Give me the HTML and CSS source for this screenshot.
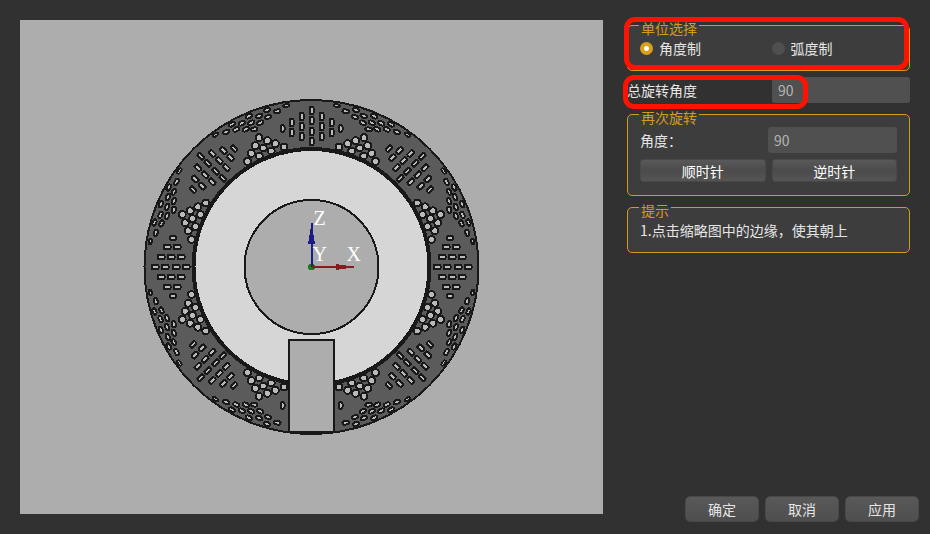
FILE: index.html
```html
<!DOCTYPE html>
<html lang="zh-CN">
<head>
<meta charset="utf-8">
<meta name="viewport" content="width=device-width, initial-scale=1">
<title>旋转</title>
<link rel="stylesheet" href="styles.css">
</head>
<body>
<main class="dialog">
  <div class="preview">
    <svg class="model" viewBox="-168.5 -168 337 336" width="337" height="336" aria-hidden="true">
      <defs>
        <!-- long slots, radial -->
        <g id="slots" class="hole">
          <rect x="-2" y="-160" width="4" height="7" rx="1"/>
          <rect x="-2" y="-150" width="4" height="7" rx="1"/>
          <rect x="-2" y="-139" width="4" height="7" rx="1"/>
          <rect x="-2" y="-129" width="4" height="7" rx="1"/>
          <rect x="-12" y="-154" width="4" height="7" rx="1"/>
          <rect x="-12" y="-144" width="4" height="7" rx="1"/>
          <rect x="-12" y="-134" width="4" height="7" rx="1"/>
          <rect x="8" y="-154" width="4" height="7" rx="1"/>
          <rect x="8" y="-144" width="4" height="7" rx="1"/>
          <rect x="8" y="-134" width="4" height="7" rx="1"/>
          <rect x="-22" y="-148" width="4" height="7" rx="1"/>
          <rect x="-22" y="-138" width="4" height="7" rx="1"/>
          <rect x="18" y="-148" width="4" height="7" rx="1"/>
          <rect x="18" y="-138" width="4" height="7" rx="1"/>
          <rect x="-31" y="-142" width="4" height="7" rx="2"/>
          <rect x="27" y="-142" width="4" height="7" rx="2"/>
        </g>
        <!-- round holes by the inner ring, small holes by the rim -->
        <g id="fan">
          <g class="hole">
            <circle cx="-52.5" cy="-129.3" r="3.5"/>
            <circle cx="-44.2" cy="-126.3" r="3.5"/>
            <circle cx="-36.2" cy="-123.3" r="3.5"/>
            <circle cx="-27.5" cy="-120" r="3.5"/>
            <circle cx="-56.2" cy="-121.3" r="3.5"/>
            <circle cx="-48.2" cy="-119" r="3.5"/>
            <circle cx="-40.2" cy="-116" r="3.5"/>
            <circle cx="-60.2" cy="-113.7" r="3.5"/>
            <circle cx="-52.2" cy="-111" r="3.5"/>
            <circle cx="-64" cy="-105.7" r="3.5"/>
          </g>
          <g class="hole">
            <ellipse cx="-85.2" cy="-135" rx="3.3" ry="1.9" transform="rotate(-25 -85.2 -135)"/>
            <ellipse cx="-75.2" cy="-137.7" rx="3.3" ry="1.9" transform="rotate(-25 -75.2 -137.7)"/>
            <ellipse cx="-65.8" cy="-137.7" rx="3.3" ry="1.9" transform="rotate(-22 -65.8 -137.7)"/>
            <ellipse cx="-57.2" cy="-137.7" rx="3.3" ry="1.9" transform="rotate(-10 -57.2 -137.7)"/>
            <ellipse cx="-79.5" cy="-142.7" rx="3.3" ry="1.9" transform="rotate(-25 -79.5 -142.7)"/>
            <ellipse cx="-69.8" cy="-143.7" rx="3.3" ry="1.9" transform="rotate(-22 -69.8 -143.7)"/>
            <ellipse cx="-60.2" cy="-144.3" rx="3.3" ry="1.9" transform="rotate(-22 -60.2 -144.3)"/>
            <ellipse cx="-51.2" cy="-144.3" rx="3.3" ry="1.9" transform="rotate(-22 -51.2 -144.3)"/>
            <ellipse cx="-62.8" cy="-150.7" rx="3.3" ry="1.9" transform="rotate(-22 -62.8 -150.7)"/>
            <ellipse cx="-52.2" cy="-151" rx="3.3" ry="1.9" transform="rotate(-22 -52.2 -151)"/>
            <ellipse cx="-43.5" cy="-150" rx="3.3" ry="1.9" transform="rotate(-22 -43.5 -150)"/>
            <ellipse cx="-44.5" cy="-157" rx="3.3" ry="1.9" transform="rotate(-15 -44.5 -157)"/>
            <ellipse cx="-34.2" cy="-155.7" rx="3.3" ry="1.9" transform="rotate(-15 -34.2 -155.7)"/>
          </g>
        </g>
        <g id="tips" class="hole">
          <ellipse cx="-25.5" cy="-161.3" rx="3" ry="1.5" transform="rotate(-10 -25.5 -161.3)"/>
          <ellipse cx="25.5" cy="-161.3" rx="3" ry="1.5" transform="rotate(10 25.5 -161.3)"/>
        </g>
      </defs>
      <circle class="rim" r="167"/>
      <use href="#slots"/>
      <use href="#slots" transform="rotate(45)"/>
      <use href="#slots" transform="rotate(90)"/>
      <use href="#slots" transform="rotate(135)"/>
      <use href="#slots" transform="rotate(180)"/>
      <use href="#slots" transform="rotate(225)"/>
      <use href="#slots" transform="rotate(270)"/>
      <use href="#slots" transform="rotate(315)"/>
      <use href="#fan"/>
      <use href="#fan" transform="scale(-1 1)"/>
      <use href="#fan" transform="rotate(90) scale(-1 1)"/>
      <use href="#fan" transform="rotate(90)"/>
      <use href="#fan" transform="rotate(180)"/>
      <use href="#fan" transform="scale(1 -1)"/>
      <use href="#fan" transform="rotate(270)"/>
      <use href="#fan" transform="rotate(270) scale(-1 1)"/>
      <use href="#tips"/>
      <use href="#tips" transform="rotate(45)"/>
      <use href="#tips" transform="rotate(90)"/>
      <use href="#tips" transform="rotate(135)"/>
      <use href="#tips" transform="rotate(225)"/>
      <use href="#tips" transform="rotate(270)"/>
      <use href="#tips" transform="rotate(315)"/>
      <circle class="disc" r="118"/>
      <circle class="bore" r="67"/>
      <path class="key" d="M-22.5 73H22.5V164.5Q0 166.5 -22.5 164.5Z"/>
      <circle cx="0" cy="0" r="3.5" fill="#1d7d1d"/>
      <path d="M0 0V-44" stroke="#1c1c86" stroke-width="2"/>
      <path d="M-3.5 -23L-1 -38H1L3.5 -23Z" fill="#1c1c86"/>
      <path d="M0 0H42" stroke="#861c1c" stroke-width="2"/>
      <path d="M24 -3L38 -1V1L24 3Z" fill="#861c1c"/>
      <text class="axis" x="2" y="-42">Z</text>
      <text class="axis" x="1" y="-6">Y</text>
      <text class="axis" x="35" y="-6">X</text>
    </svg>
  </div>

  <form class="side">
    <div class="settings">
      <fieldset class="group units">
        <legend>单位选择</legend>
        <div class="pair">
          <label class="choice"><input type="radio" name="unit" checked>角度制</label>
          <label class="choice"><input type="radio" name="unit">弧度制</label>
        </div>
      </fieldset>

      <div class="total">
        <label for="total">总旋转角度</label>
        <input class="field" id="total" type="text" value="90">
      </div>

      <fieldset class="group again">
        <legend>再次旋转</legend>
        <div class="angle">
          <label for="angle">角度：</label>
          <input class="field" id="angle" type="text" value="90">
        </div>
        <div class="pair">
          <button class="turn" type="button">顺时针</button>
          <button class="turn" type="button">逆时针</button>
        </div>
      </fieldset>

      <fieldset class="group hint">
        <legend>提示</legend>
        <p>1.点击缩略图中的边缘，使其朝上</p>
      </fieldset>
    </div>

    <div class="actions">
      <button type="button">确定</button>
      <button type="button">取消</button>
      <button type="button">应用</button>
    </div>
  </form>
</main>
</body>
</html>
```
FILE: styles.css
```css
* {
  box-sizing: border-box;
}

body {
  margin: 0;
  background: #313131;
  color: #e6e6e6;
  font: 14px/20px "Noto Sans CJK SC", sans-serif;
}

input,
button {
  font: inherit;
  color: inherit;
}

.dialog {
  display: flex;
  gap: 24px;
  min-height: 100vh;
  padding: 20px 11px 12px 20px;
}

.preview {
  flex: 1;
  display: flex;
  align-items: center;
  justify-content: center;
  margin-bottom: 8px;
  background: #adadad;
}

.model {
  display: block;
  max-width: 100%;
  shape-rendering: crispEdges;
}

.rim {
  fill: #5b5b5b;
  stroke: #191919;
  stroke-width: 2;
}

.hole {
  fill: #bababa;
  stroke: #191919;
  stroke-width: 2;
}

.disc {
  fill: #d6d6d6;
  stroke: #191919;
  stroke-width: 4;
}

.bore {
  fill: #adadad;
  stroke: #191919;
  stroke-width: 2;
}

.key {
  fill: #adadad;
  stroke: #191919;
  stroke-width: 2;
}

.axis {
  fill: #fff;
  font: 20px "Liberation Serif", serif;
}

.side {
  display: flex;
  flex-direction: column;
  justify-content: space-between;
  flex: 0 0 292px;
}

.settings {
  display: flex;
  flex-direction: column;
  gap: 6px;
  margin-right: 9px;
}

.group {
  position: relative;
  min-width: 0;
  margin: 0;
  padding: 6px 12px 10px;
  border: 1px solid #d49a1a;
  border-radius: 5px;
  background: #3d3d3d;
}

.group legend {
  height: 10px;
  margin-left: -1px;
  padding: 0 2px;
  color: #d49a1a;
  line-height: 16px;
}

.again {
  padding: 8px 12px 13px;
}

.hint {
  padding: 8px 12px 12px;
}

.hint p {
  margin: 0;
}

.pair {
  display: grid;
  grid-template-columns: 1fr 1fr;
  gap: 6px;
}

.choice {
  display: flex;
  align-items: center;
  gap: 6px;
  height: 24px;
}

.choice input {
  appearance: none;
  width: 13px;
  height: 13px;
  margin: 0;
  border-radius: 50%;
  background: #4f4f4f;
}

.choice input:checked {
  background: radial-gradient(circle, #fff 2px, #dc9f19 3px);
}

.total,
.angle {
  position: relative;
  display: flex;
  align-items: center;
  justify-content: space-between;
}

.angle {
  margin-bottom: 6px;
}

.field {
  width: 138px;
  height: 26px;
  padding: 0 6px;
  border: 0;
  border-radius: 3px;
  background: #505050;
  color: #b4b4b4;
}

.angle .field {
  width: 129px;
}

button {
  padding: 0;
  border: 1px solid #484848;
  border-radius: 4px;
  background: linear-gradient(#595959, #4e4e4e);
}

.turn {
  height: 23px;
  border-radius: 3px;
  background: linear-gradient(#595959, #4b4b4b 50%, #555);
  color: #fff;
}

.actions {
  display: flex;
  justify-content: flex-end;
  gap: 6px;
}

.actions button {
  width: 74px;
  height: 26px;
  border-radius: 5px;
}

/* Marker frames around the unit choice and the total angle */
.units::after,
.total::after {
  content: "";
  position: absolute;
  border: 5px solid #ff1200;
  border-radius: 11px;
  pointer-events: none;
}

.units::after {
  inset: -13px 0 0 -4px;
}

.total::after {
  inset: -2px 102px -6px -4px;
}
```
